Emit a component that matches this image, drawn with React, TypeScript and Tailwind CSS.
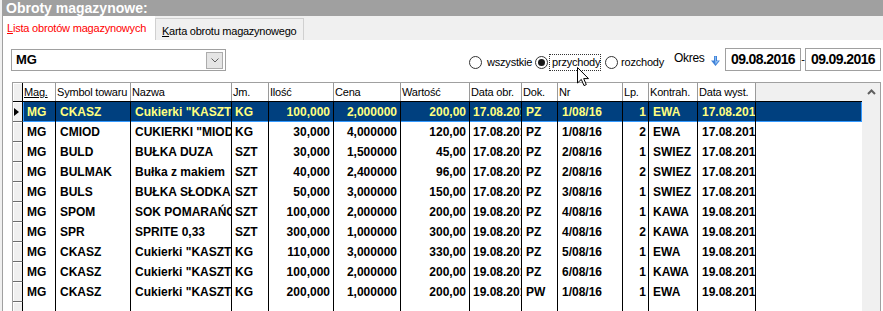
import React from "react";

type Col = { w: string; label: string; right?: boolean; pl?: string; under?: boolean };

const cols: Col[] = [
  { w: "w-[33px]", label: "Mag.", under: true },
  { w: "w-[75px]", label: "Symbol towaru" },
  { w: "w-[101px]", label: "Nazwa" },
  { w: "w-[37px]", label: "Jm.", pl: "pl-[3px]" },
  { w: "w-[65px]", label: "Ilość", right: true },
  { w: "w-[67px]", label: "Cena", right: true },
  { w: "w-[69px]", label: "Wartość", right: true },
  { w: "w-[52px]", label: "Data obr.", pl: "pl-[3px]" },
  { w: "w-[36px]", label: "Dok." },
  { w: "w-[65px]", label: "Nr" },
  { w: "w-[26px]", label: "Lp.", right: true },
  { w: "w-[49px]", label: "Kontrah." },
  { w: "w-[58px]", label: "Data wyst." },
];

const rows: string[][] = [
  ["MG", "CKASZ", 'Cukierki "KASZTANKI"', "KG", "100,000", "2,000000", "200,00", "17.08.2016", "PZ", "1/08/16", "1", "EWA", "17.08.2016"],
  ["MG", "CMIOD", 'CUKIERKI "MIODOWE"', "KG", "30,000", "4,000000", "120,00", "17.08.2016", "PZ", "1/08/16", "2", "EWA", "17.08.2016"],
  ["MG", "BULD", "BUŁKA DUZA", "SZT", "30,000", "1,500000", "45,00", "17.08.2016", "PZ", "2/08/16", "1", "SWIEZ", "17.08.2016"],
  ["MG", "BULMAK", "Bułka z makiem", "SZT", "40,000", "2,400000", "96,00", "17.08.2016", "PZ", "2/08/16", "2", "SWIEZ", "17.08.2016"],
  ["MG", "BULS", "BUŁKA SŁODKA", "SZT", "50,000", "3,000000", "150,00", "17.08.2016", "PZ", "3/08/16", "1", "SWIEZ", "17.08.2016"],
  ["MG", "SPOM", "SOK POMARAŃCZOWY", "SZT", "100,000", "2,000000", "200,00", "19.08.2016", "PZ", "4/08/16", "1", "KAWA", "19.08.2016"],
  ["MG", "SPR", "SPRITE 0,33", "SZT", "300,000", "1,000000", "300,00", "19.08.2016", "PZ", "4/08/16", "2", "KAWA", "19.08.2016"],
  ["MG", "CKASZ", 'Cukierki "KASZTANKI"', "KG", "110,000", "3,000000", "330,00", "19.08.2016", "PZ", "5/08/16", "1", "EWA", "19.08.2016"],
  ["MG", "CKASZ", 'Cukierki "KASZTANKI"', "KG", "100,000", "2,000000", "200,00", "19.08.2016", "PZ", "6/08/16", "1", "KAWA", "19.08.2016"],
  ["MG", "CKASZ", 'Cukierki "KASZTANKI"', "KG", "200,000", "1,000000", "200,00", "19.08.2016", "PW", "1/08/16", "1", "EWA", "19.08.2016"],
];

function Radio({ checked }: { checked?: boolean }) {
  return (
    <div className="flex h-[13px] w-[13px] items-center justify-center rounded-full border border-[#333333] bg-white">
      {checked && <div className="h-[7px] w-[7px] rounded-full bg-[#1a1a1a]" />}
    </div>
  );
}

function Indicator({ selected }: { selected?: boolean }) {
  return (
    <div className="flex h-[20px] w-[10px] shrink-0 items-center border-r border-b border-r-black border-b-[#6d6d6d] bg-[#f0f0f0] shadow-[inset_1px_1px_0_#ffffff]">
      {selected && (
        <svg width="5" height="8" viewBox="0 0 5 8" className="ml-[1px]">
          <polygon points="0,0 5,4 0,8" fill="#000" />
        </svg>
      )}
    </div>
  );
}

function DataRow({ cells, selected }: { cells?: string[]; selected?: boolean }) {
  return (
    <div className="flex h-[20px]">
      <Indicator selected={selected} />
      <div
        className={
          selected
            ? "flex flex-1 bg-[#00407f] text-[#ffff80] shadow-[inset_1px_0_0_#3399ff,inset_-1px_0_0_#3399ff,inset_0_-1px_0_#3399ff]"
            : "flex flex-1 text-black"
        }
      >
        {cols.map((c, i) => (
          <div
            key={i}
            className={`${c.w} shrink-0 overflow-hidden whitespace-nowrap border-r border-black text-[12px] font-bold leading-[20px] ${
              c.right ? (i === 10 ? "pr-[2px] text-right" : "pr-[3px] text-right") : c.pl ?? "pl-[4px]"
            }`}
          >
            {cells ? cells[i] : ""}
          </div>
        ))}
        <div className="flex-1" />
      </div>
    </div>
  );
}

export default function App() {
  return (
    <div className="relative h-[311px] w-[883px] overflow-hidden bg-[#f0f0f0] font-['Liberation_Sans',Arial,sans-serif] text-black">
      <div className="ml-[2px] flex h-full flex-col">
        {/* title bar */}
        <div className="h-[16px] bg-[#a0a0a0] pl-[4px] text-[14px] font-bold leading-[16px] text-white">
          Obroty magazynowe:
        </div>
        <div className="h-[1px] bg-white" />

        <div className="flex flex-1 flex-col border-l border-[#a0a0a0] bg-white">
          {/* tabs */}
          <div className="flex h-[24px] items-end bg-[#f0f0f0]">
            <div className="flex h-[24px] w-[152px] items-center bg-white pl-[4px] text-[11px] tracking-[-0.2px] text-[#ff0000]">
              <span>
                <span className="underline">L</span>ista obrotów magazynowych
              </span>
            </div>
            <div className="flex h-[22px] w-[149px] items-center border border-b-0 border-[#d0d0d0] bg-[#f0f0f0] pl-[6px] pt-[3px] text-[11px] tracking-[-0.25px]">
              <span>
                <span className="underline">K</span>arta obrotu magazynowego
              </span>
            </div>
          </div>

          {/* filter row */}
          <div className="mt-[8px] flex h-[23px] pr-[2px]">
            <div className="ml-[8px] mt-[1px] flex h-[22px] w-[215px] items-center justify-between border border-[#a0a0a0] bg-white">
              <span className="pl-[4px] text-[13px] font-bold">MG</span>
              <div className="mr-[2px] flex h-[17px] w-[17px] items-center justify-center border border-[#acacac] bg-[#e5e5e5]">
                <svg width="8" height="5" viewBox="0 0 8 5">
                  <polyline points="0.5,0.5 4,4 7.5,0.5" fill="none" stroke="#606060" strokeWidth="1" />
                </svg>
              </div>
            </div>

            <div className="ml-auto flex">
              <div className="mt-[6px] flex h-[17px] items-center self-start text-[11px] tracking-[-0.2px]">
                <Radio />
                <span className="ml-[5px] w-[48px]">wszystkie</span>
                <Radio checked />
                <span className="ml-[1px] flex h-[17px] w-[52px] items-center border border-dotted border-[#333333] pl-[2px]">
                  przychody
                </span>
                <span className="ml-[4px]">
                  <Radio />
                </span>
                <span className="ml-[3px] w-[53px]">rozchody</span>
              </div>
              <span className="mt-[4px] w-[37px] self-start text-[12px] leading-[13px] tracking-[-0.3px]">Okres</span>
              <svg width="9" height="10" viewBox="0 0 9 10" className="mt-[8px] self-start">
                <path d="M3 0 H6 V4.5 H9 L4.5 10 L0 4.5 H3 Z" fill="#3f82d8" />
                <path d="M3.7 0.5 H5 V5 H7.5 L4.5 8.6 Z" fill="#8cbcf2" />
              </svg>
              <div className="ml-[5px] flex h-[23px] w-[76px] items-center justify-center border border-[#a0a0a0] bg-white text-[14px] font-bold tracking-[-0.6px]">
                09.08.2016
              </div>
              <span className="flex h-[23px] w-[4px] items-center justify-center text-[11px]">-</span>
              <div className="flex h-[23px] w-[76px] items-center justify-center border border-[#a0a0a0] bg-white text-[14px] font-bold tracking-[-0.6px]">
                09.09.2016
              </div>
            </div>
          </div>

          {/* grid */}
          <div className="ml-[9px] mt-[11px] flex w-[869px] flex-1 border border-[#a0a0a0]">
            <div className="flex w-[849px] flex-col">
              <div className="flex h-[19px] border-b border-black">
                <div className="w-[10px] shrink-0 border-r border-r-black bg-[#f0f0f0] shadow-[inset_1px_1px_0_#ffffff]" />
                {cols.map((c, i) => (
                  <div
                    key={i}
                    className={`${c.w} shrink-0 overflow-hidden whitespace-nowrap border-r border-[#9a9a9a] bg-white pl-[1px] text-[11px] leading-[18px] tracking-[-0.2px]`}
                  >
                    {c.under ? <span className="underline">{c.label}</span> : c.label}
                  </div>
                ))}
                <div className="flex-1 bg-[#f0f0f0]" />
              </div>
              {rows.map((r, i) => (
                <DataRow key={i} cells={r} selected={i === 0} />
              ))}
              <DataRow />
            </div>
            <div className="flex w-[18px] justify-center bg-[#f0f0f0] pt-[6px]">
              <svg width="9" height="6" viewBox="0 0 9 6">
                <polyline points="1,5 4.5,1.5 8,5" fill="none" stroke="#606060" strokeWidth="2" />
              </svg>
            </div>
          </div>
        </div>
      </div>

      {/* mouse cursor */}
      <svg width="13" height="20" viewBox="0 0 13 20" className="absolute left-[577px] top-[67px]">
        <path d="M0.5 0.5 V16 L4.3 12.4 L7 18.6 L9.3 17.6 L6.7 11.6 H11.5 Z" fill="#fff" stroke="#000" strokeWidth="1" />
      </svg>
    </div>
  );
}
